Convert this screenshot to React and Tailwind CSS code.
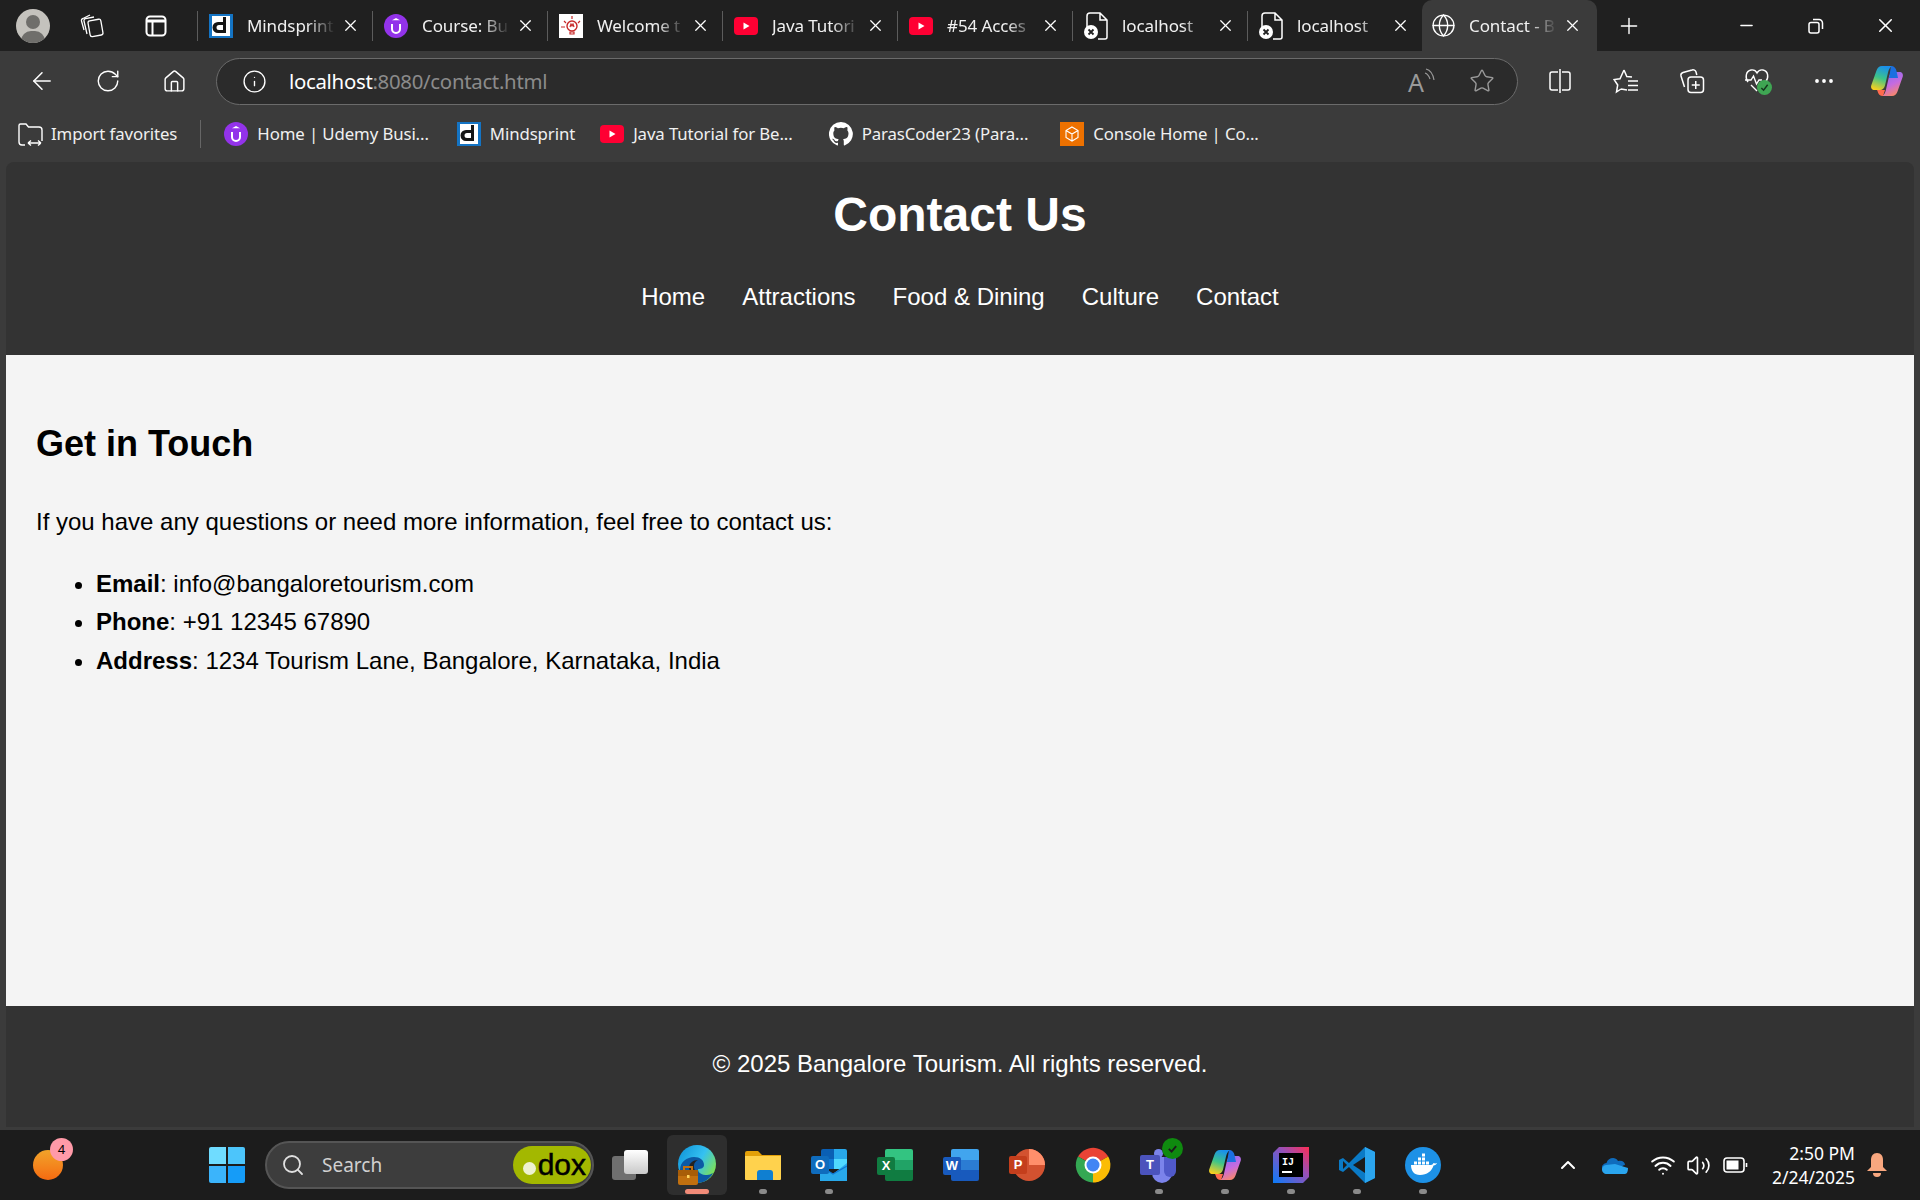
import React from 'react';
import { ArrowLeft, RotateCw, Home, Info, Star, X, Plus, Minus, Globe, MoreHorizontal, Search, ChevronUp, Wifi, Volume2 } from 'lucide-react';

const uiFont = "font-['Noto_Sans','Open_Sans',sans-serif]";

function DocIcon() {
  return (
    <svg width="26" height="30" viewBox="0 0 26 30" fill="none" stroke="#fff" strokeWidth="1.5">
      <path d="M9 2h8l7 7v17a2 2 0 0 1-2 2h-7M17 2v7h7M4 17V5a3 3 0 0 1 3-3h2" />
      <circle cx="8" cy="21" r="7" fill="#fff" stroke="none" />
      <path d="M5.5 18.5l5 5M10.5 18.5l-5 5" stroke="#222" strokeWidth="1.8" />
    </svg>
  );
}

function DIcon({ bg = '#fff' }) {
  return (
    <svg width="24" height="24" viewBox="0 0 24 24">
      <rect width="24" height="24" fill="#1474c4" />
      <rect x="3" y="2" width="18" height="20" fill={bg} />
      <path d="M14 3h3v16h-8a5 5 0 0 1 0-11h5zM10 11a2 2 0 0 0 0 5h4v-5z" fill="#151515" fillRule="evenodd" />
    </svg>
  );
}

function UdemyIcon() {
  return (
    <svg width="24" height="24" viewBox="0 0 24 24">
      <circle cx="12" cy="12" r="12" fill="#9333ea" />
      <path d="M8 10v5a4 4 0 0 0 8 0v-5" fill="none" stroke="#fff" strokeWidth="2" />
      <path d="M12 4l4 2.2H8z" fill="#fff" />
    </svg>
  );
}

function BulbIcon() {
  return (
    <svg width="24" height="24" viewBox="0 0 24 24">
      <rect width="24" height="24" fill="#fff" />
      <circle cx="13" cy="12" r="5" fill="none" stroke="#c62828" strokeWidth="1.4" />
      <path d="M13 2v3M5 7l2 2M2 13h4M21 7l-2 2M11 18h4v2h-4zM11 13l1-3 1 2 1-2 1 3" stroke="#c62828" strokeWidth="1.2" fill="none" />
    </svg>
  );
}

function YtIcon() {
  return (
    <svg width="24" height="18" viewBox="0 0 24 18">
      <rect width="24" height="18" rx="4" fill="#ff0033" />
      <path d="M9.5 5.5l6 3.5-6 3.5z" fill="#fff" />
    </svg>
  );
}

function GithubIcon() {
  return (
    <svg width="24" height="24" viewBox="0 0 24 24" fill="#fff">
      <path d="M12 0a12 12 0 0 0-3.8 23.4c.6.1.8-.3.8-.6v-2c-3.3.7-4-1.6-4-1.6-.6-1.4-1.4-1.8-1.4-1.8-1-.7.1-.7.1-.7 1.2.1 1.8 1.2 1.8 1.2 1 1.8 2.8 1.3 3.5 1 .1-.8.4-1.3.8-1.6-2.7-.3-5.5-1.3-5.5-6 0-1.2.5-2.3 1.2-3.1-.1-.3-.5-1.5.1-3.2 0 0 1-.3 3.3 1.2a11.500 11.500 0 0 1 6 0c2.300-1.500 3.300-1.200 3.300-1.200.6 1.700.2 2.900.1 3.200.8.800 1.200 1.900 1.200 3.100 0 4.700-2.800 5.700-5.500 6 .4.400.8 1.100.8 2.200v3.300c0 .3.2.700.8.600A12 12 0 0 0 12 0z" />
    </svg>
  );
}

function AwsIcon() {
  return (
    <svg width="24" height="24" viewBox="0 0 24 24">
      <rect width="24" height="24" fill="#ed7100" />
      <path d="M12 5l6 3.500v7L12 19l-6-3.500v-7zM6 8.500l6 3.500 6-3.500M12 12v7" fill="none" stroke="#fff" strokeWidth="1.1" />
    </svg>
  );
}

function CopilotIcon({ id, size = 34 }) {
  const ribbon = "M12 2h10c-2.500 1.500-3.500 4-4 6.500l-3 13c-.6 2.500-2.500 4.500-5 4.500H4.500C2 26 .6 24 1.200 21.500L6.500 6.500C7.300 3.800 9.300 2 12 2z";
  return (
    <svg width={size} height={size} viewBox="0 0 34 34">
      <defs>
        <linearGradient id={`${id}a`} x1="0.6" y1="0" x2="0.3" y2="1">
          <stop offset="0" stopColor="#1a8fec" />
          <stop offset="0.5" stopColor="#3cc48a" />
          <stop offset="1" stopColor="#f8cf1f" />
        </linearGradient>
        <linearGradient id={`${id}b`} x1="0.7" y1="1" x2="0.3" y2="0">
          <stop offset="0" stopColor="#8a6cf0" />
          <stop offset="0.5" stopColor="#c56be0" />
          <stop offset="1" stopColor="#ff8a5c" />
        </linearGradient>
      </defs>
      <path d={ribbon} fill={`url(#${id}a)`} />
      <path d={ribbon} fill={`url(#${id}b)`} transform="rotate(180 17 17)" />
      <path d="M21 2c3 0 5 2 5.500 5l1.500 7h-9l2-12z" fill="#1b6fe0" />
      <path d="M13 32c-3 0-5-2-5.500-5l-.5-1h8z" fill="#ff6a4d" />
    </svg>
  );
}

function EdgeIcon() {
  return (
    <svg width="40" height="42" viewBox="0 0 40 42">
      <defs>
        <linearGradient id="edgeA" x1="0" y1="0" x2="1" y2="0.6">
          <stop offset="0" stopColor="#0c8fd6" />
          <stop offset="0.6" stopColor="#35c1f1" />
          <stop offset="1" stopColor="#7be05a" />
        </linearGradient>
      </defs>
      <circle cx="20" cy="20" r="19" fill="url(#edgeA)" />
      <path d="M3 26c0-8 7-13 14-13 6 0 10 3 10 8 0 3-3 4-6 4 0 4 4 6 9 6 2 0 4-1 6-2-3 6-9 10-16 10C11 39 3 34 3 26z" fill="#0c59a4" />
      <path d="M12 24c0-5 4-8 9-8-5 2-5 8-2 12-3 0-7-1-7-4z" fill="#222" />
      <rect x="1" y="26" width="20" height="15" rx="2" fill="#c2700f" />
      <rect x="1" y="26" width="20" height="6" fill="#a85d08" />
      <path d="M7 26v-3h8v3" fill="none" stroke="#c2700f" strokeWidth="2" />
      <rect x="10" y="31" width="2.500" height="3" fill="#ffd35c" />
    </svg>
  );
}

function FilesIcon() {
  return (
    <svg width="36" height="32" viewBox="0 0 36 32">
      <path d="M0 4a2 2 0 0 1 2-2h11l4 4h19v6H0z" fill="#e3a008" />
      <path d="M0 7h36v23a1 1 0 0 1-1 1H1a1 1 0 0 1-1-1z" fill="#ffd24d" />
      <path d="M12 31v-7a3 3 0 0 1 3-3h10a3 3 0 0 1 3 3v7z" fill="#0f7fd1" />
    </svg>
  );
}

function OfficeIcon({ letter, back, mid, top, badge }) {
  return (
    <div className="relative h-[32px] w-[36px]">
      <div className="absolute right-0 top-0 flex h-full w-[28px] flex-col overflow-hidden rounded-[2px]">
        <div className="flex-1" style={{ background: top }} />
        <div className="flex-1" style={{ background: mid }} />
        <div className="flex-1" style={{ background: back }} />
      </div>
      <div className="absolute left-0 top-[8px] flex h-[18px] w-[18px] items-center justify-center rounded-[2px] font-['Liberation_Sans',sans-serif] text-[13px] font-bold text-white" style={{ background: badge }}>{letter}</div>
    </div>
  );
}

function OutlookIcon() {
  return (
    <div className="relative h-[32px] w-[36px]">
      <div className="absolute right-0 top-0 grid h-[20px] w-[26px] grid-cols-2 overflow-hidden rounded-t-[2px]">
        <div className="bg-[#0a5fb4]" /><div className="bg-[#28a8ea]" />
        <div className="bg-[#0f78d4]" /><div className="bg-[#50d9ff]" />
      </div>
      <svg className="absolute bottom-0 right-0" width="27" height="18" viewBox="0 0 27 18">
        <path d="M0 3l13 8 14-11v18H0z" fill="#28a8ea" />
        <path d="M0 3l13 8 14-8" fill="none" stroke="#0f78d4" strokeWidth="1.200" />
      </svg>
      <div className="absolute left-0 top-[7px] flex h-[18px] w-[18px] items-center justify-center rounded-[2px] bg-[#0f6cbd] font-['Liberation_Sans',sans-serif] text-[13px] font-bold text-white">O</div>
    </div>
  );
}

function PptIcon() {
  return (
    <div className="relative h-[32px] w-[36px]">
      <svg className="absolute right-0 top-0" width="32" height="32" viewBox="0 0 32 32">
        <circle cx="16" cy="16" r="16" fill="#d35230" />
        <path d="M16 0a16 16 0 0 1 16 16H16z" fill="#ff8f6b" />
      </svg>
      <div className="absolute left-0 top-[7px] flex h-[18px] w-[18px] items-center justify-center rounded-[2px] bg-[#c43e1c] font-['Liberation_Sans',sans-serif] text-[13px] font-bold text-white">P</div>
    </div>
  );
}

function ChromeIcon() {
  return (
    <svg width="36" height="36" viewBox="0 0 36 36">
      <path d="M18 18L3 9.500A17.500 17.500 0 0 1 33.200 9.500z" fill="#ea4335" />
      <path d="M18 18L33.200 9.500A17.500 17.500 0 0 1 18 35.500z" fill="#fbbc04" />
      <path d="M18 18v17.500A17.500 17.500 0 0 1 3 9.500z" fill="#34a853" />
      <circle cx="18" cy="18" r="8.500" fill="#fff" />
      <circle cx="18" cy="18" r="6.500" fill="#4285f4" />
    </svg>
  );
}

function TeamsIcon() {
  return (
    <div className="relative h-[36px] w-[38px]">
      <div className="absolute left-[14px] top-[2px] h-[9px] w-[9px] rounded-full bg-[#7b83eb]" />
      <div className="absolute left-[12px] top-[10px] h-[26px] w-[20px] rounded-b-full rounded-t-[6px] bg-[#7b83eb]" />
      <div className="absolute left-[24px] top-[10px] h-[20px] w-[12px] rounded-b-full rounded-t-[5px] bg-[#5059c9]" />
      <div className="absolute left-0 top-[8px] flex h-[20px] w-[20px] items-center justify-center rounded-[2px] bg-[#4b53bc] font-['Liberation_Sans',sans-serif] text-[13px] font-bold text-white">T</div>
      <div className="absolute -top-[9px] left-[22px] flex h-[21px] w-[21px] items-center justify-center rounded-full bg-[#0f8a0f]">
        <svg width="11" height="11" viewBox="0 0 12 12" fill="none" stroke="#1b1b1b" strokeWidth="2"><path d="M2 6.500l3 3 5-6" /></svg>
      </div>
    </div>
  );
}

function IntellijIcon() {
  return (
    <svg width="36" height="36" viewBox="0 0 36 36">
      <defs>
        <linearGradient id="ijA" x1="0" y1="1" x2="1" y2="0">
          <stop offset="0" stopColor="#087cfa" />
          <stop offset="0.6" stopColor="#9a4fb5" />
          <stop offset="1" stopColor="#ff2d55" />
        </linearGradient>
      </defs>
      <path d="M6 0h30v30l-6 6H0V6z" fill="url(#ijA)" />
      <rect x="6" y="6" width="24" height="24" fill="#000" />
      <text x="9" y="18" fontSize="10" fontWeight="700" fill="#fff" fontFamily="Liberation Mono, monospace">IJ</text>
      <rect x="9" y="24" width="10" height="2" fill="#fff" />
    </svg>
  );
}

function VsCodeIcon() {
  return (
    <svg width="36" height="36" viewBox="0 0 36 36">
      <path d="M26 0l10 5v26l-10 5L10 20l-6 5-4-2 0-10 4-2 6 5z" fill="#0a7ac6" />
      <path d="M26 0l10 5v26l-10 5z" fill="#2ba5ee" />
      <path d="M26 10L14 18l12 8z" fill="#1b1b1b" />
      <path d="M4 14l4 4-4 4z" fill="#1b1b1b" />
    </svg>
  );
}

function DockerIcon() {
  return (
    <svg width="36" height="36" viewBox="0 0 36 36">
      <circle cx="18" cy="18" r="18" fill="#1d91e6" />
      <path d="M6 18h20c1 0 2-1 2.500-2 1 .5 2.500 .5 3.500 0-.5 1.500-2 2.500-3.500 2.500C27 24 22 28 15 28c-6 0-9-4-9-10z" fill="#fff" />
      <path d="M9 14.500h3v3H9zM13 14.500h3v3h-3zM17 14.500h3v3h-3zM21 14.500h3v3h-3zM13 10.500h3v3h-3zM17 10.500h3v3h-3zM17 6.500h3v3h-3z" fill="#fff" />
    </svg>
  );
}

function Tab({ icon, title, active }) {
  return (
    <div className={active
      ? "relative flex h-[51px] w-[175px] items-center rounded-t-[10px] bg-[#3b3b3b] pl-[8px]"
      : "relative flex h-[51px] w-[175px] items-center pl-[11px] before:absolute before:left-0 before:top-[11px] before:h-[30px] before:w-px before:bg-[#5c5c5c]"}>
      <div className="flex w-[26px] shrink-0 items-center justify-center">{icon}</div>
      <div className="ml-[13px] w-[88px] overflow-hidden whitespace-nowrap text-[17px] tracking-[-0.1px] text-[#f0f0f0] [mask-image:linear-gradient(to_right,black_68%,transparent)]">{title}</div>
      <X className="ml-[6px] text-white" size={19} strokeWidth={1.6} />
    </div>
  );
}

function TabStrip() {
  const tabs = [
    { icon: <DIcon />, title: 'Mindsprint' },
    { icon: <UdemyIcon />, title: 'Course: Bu' },
    { icon: <BulbIcon />, title: 'Welcome t' },
    { icon: <YtIcon />, title: 'Java Tutori' },
    { icon: <YtIcon />, title: '#54 Acces' },
    { icon: <DocIcon />, title: 'localhost' },
    { icon: <DocIcon />, title: 'localhost' },
    { icon: <Globe size={25} strokeWidth={1.3} className="text-white" />, title: 'Contact - B', active: true },
  ];
  return (
    <div className="flex h-[51px] items-end bg-[#202020]">
      <div className="flex h-full w-[197px] shrink-0 items-center pl-[16px]">
        <div className="relative h-[34px] w-[34px] overflow-hidden rounded-full bg-[#c4c2bd]">
          <div className="absolute left-[10px] top-[6px] h-[14px] w-[14px] rounded-full bg-[#6f6e6b]" />
          <div className="absolute left-[5px] top-[22px] h-[20px] w-[24px] rounded-full bg-[#6f6e6b]" />
        </div>
        <svg className="ml-[29px]" width="26" height="26" viewBox="0 0 26 26" fill="none" stroke="#fff" strokeWidth="1.3">
          <rect x="10" y="7" width="13" height="16" rx="2" transform="rotate(-10 16 15)" />
          <path d="M8 21L5 8a2 2 0 0 1 1.500-2.400L15 4M5 17L2.500 8a2 2 0 0 1 1.500-2.500L11 2" />
        </svg>
        <svg className="ml-[39px]" width="24" height="24" viewBox="0 0 24 24" fill="none" stroke="#fff" strokeWidth="2">
          <rect x="2.500" y="2.500" width="19" height="19" rx="3.500" />
          <path d="M2.500 7h19" strokeWidth="3" />
          <path d="M8.500 8v13.500" />
        </svg>
      </div>
      {tabs.map((t, i) => <Tab key={i} {...t} />)}
      <div className="flex h-full w-[65px] items-center justify-center -ml-[1px]">
        <Plus className="text-white" size={26} strokeWidth={1.3} />
      </div>
      <div className="flex-1" />
      <div className="flex h-full w-[69px] items-center justify-center"><Minus className="text-white" size={19} strokeWidth={2} /></div>
      <div className="flex h-full w-[69px] items-center justify-center">
        <svg width="16" height="16" viewBox="0 0 16 16" fill="none" stroke="#fff" strokeWidth="1.500">
          <rect x="1" y="4.500" width="10" height="10.500" rx="2" />
          <path d="M5 1.500h6a3.500 3.500 0 0 1 3.500 3.500v6" />
        </svg>
      </div>
      <div className="flex h-full w-[70px] items-center justify-center"><X className="text-white" size={23} strokeWidth={1.6} /></div>
    </div>
  );
}

function ToolBtn({ children, className = '' }) {
  return <div className={`flex w-[66px] shrink-0 items-center justify-center ${className}`}>{children}</div>;
}

function Toolbar() {
  return (
    <div className="flex h-[60px] items-center bg-[#3b3b3b] pl-[9px]">
      <ToolBtn><ArrowLeft className="text-white" size={28} strokeWidth={1.3} /></ToolBtn>
      <ToolBtn><RotateCw className="text-white" size={26} strokeWidth={1.3} /></ToolBtn>
      <ToolBtn><Home className="text-white" size={25} strokeWidth={1.4} /></ToolBtn>
      <div className="ml-[9px] flex h-[47px] w-[1304px] items-center rounded-full border-[1.5px] border-[#6b6b6b] bg-[#2b2b2b] pl-[25px]">
        <Info className="text-white" size={25} strokeWidth={1.3} />
        <div className="ml-[22px] flex-1 text-[20.4px] tracking-[-0.3px]">
          <span className="text-white">localhost</span><span className="text-[#8b8b8b]">:8080/contact.html</span>
        </div>
        <span className="relative mr-[33px] h-[26px] w-[28px] text-[#9a9a9a]">
          <span className="absolute bottom-[-1px] left-0 text-[25px] leading-[26px]">A</span>
          <svg className="absolute right-0 top-0" width="12" height="14" viewBox="0 0 12 14" fill="none" stroke="currentColor" strokeWidth="1.200"><path d="M2 1c4 1 7 5 8 11M1 5c2.500 .8 4 3 5 6" /></svg>
        </span>
        <Star className="mr-[22px] text-[#9a9a9a]" size={26} strokeWidth={1.3} />
      </div>
      <div className="ml-[9px] flex">
        <ToolBtn>
          <svg width="24" height="26" viewBox="0 0 24 26" fill="none" stroke="#fff" strokeWidth="1.500">
            <path d="M10 4H4a2 2 0 0 0-2 2v14a2 2 0 0 0 2 2h6M14 4h6a2 2 0 0 1 2 2v14a2 2 0 0 1-2 2h-6M12 1v24" />
          </svg>
        </ToolBtn>
        <ToolBtn>
          <svg width="26" height="26" viewBox="0 0 26 26" fill="none" stroke="#fff" strokeWidth="1.500">
            <path d="M11 2l2.800 6.500 5.200.5M8 21l-4.500 3 1.200-7L1 11.500l6-.8L11 2M8 21l6 1" />
            <path d="M15 13h10M15 17.500h10M15 22h10" />
          </svg>
        </ToolBtn>
        <ToolBtn>
          <svg width="26" height="26" viewBox="0 0 26 26" fill="none" stroke="#fff" strokeWidth="1.500">
            <rect x="9" y="9" width="15.500" height="15.500" rx="3" />
            <path d="M16.750 13v8M12.750 17h8M5.500 19L2 8a3 3 0 0 1 2-3.500L13 2a3 3 0 0 1 4 2l.8 3" />
          </svg>
        </ToolBtn>
        <ToolBtn>
          <div className="relative h-[28px] w-[28px]">
            <svg width="26" height="26" viewBox="0 0 26 26" fill="none" stroke="#fff" strokeWidth="1.400">
              <path d="M4 15C1 11 1.500 4 7 3c3-.5 5 1 6 3 1-2 3-3.500 6-3 5.500 1 6 8 2.500 12M1 13h6l2.500-4 3 8 2.500-4h3M7 18l6 6" />
            </svg>
            <div className="absolute bottom-0 right-0 flex h-[15px] w-[15px] items-center justify-center rounded-full bg-[#3fa653]">
              <svg width="9" height="9" viewBox="0 0 10 10" fill="none" stroke="#14361d" strokeWidth="1.600"><path d="M1.500 5.500l2.500 2.500 4.500-6" /></svg>
            </div>
          </div>
        </ToolBtn>
        <ToolBtn><MoreHorizontal className="text-white" size={24} strokeWidth={1.8} /></ToolBtn>
        <ToolBtn className="-ml-[3px]"><CopilotIcon id="cpTop" /></ToolBtn>
      </div>
    </div>
  );
}

function Fav({ icon, title, className }) {
  return (
    <div className={`flex items-center ${className}`}>
      <div className="flex w-[24px] justify-center">{icon}</div>
      <span className="ml-[9px] whitespace-nowrap text-[16.8px] tracking-[-0.1px] text-[#f0f0f0]">{title}</span>
    </div>
  );
}

function FavBar() {
  return (
    <div className="flex h-[51px] items-center bg-[#3b3b3b] pb-[5px] pl-[18px]">
      <svg width="25" height="25" viewBox="0 0 25 25" fill="none" stroke="#fff" strokeWidth="1.400">
        <path d="M7 23H4a3 3 0 0 1-3-3V3.500A1.500 1.500 0 0 1 2.500 2H8l2.500 3H21a3 3 0 0 1 3 3v11M10 21h13M10 21l3-2.500M10 21l3 2.500M23 21l-3-2.500M23 21l-3 2.500" />
      </svg>
      <span className="ml-[8px] whitespace-nowrap text-[16.8px] tracking-[-0.1px] text-[#f0f0f0]">Import favorites</span>
      <div className="ml-[23px] h-[28px] w-px bg-[#666]" />
      <Fav className="ml-[23px]" icon={<UdemyIcon />} title="Home | Udemy Busi..." />
      <Fav className="ml-[28px]" icon={<DIcon />} title="Mindsprint" />
      <Fav className="ml-[25px]" icon={<YtIcon />} title="Java Tutorial for Be..." />
      <Fav className="ml-[36px]" icon={<GithubIcon />} title="ParasCoder23 (Para..." />
      <Fav className="ml-[32px]" icon={<AwsIcon />} title="Console Home | Co..." />
    </div>
  );
}

function SitePage() {
  const links = ['Home', 'Attractions', 'Food & Dining', 'Culture', 'Contact'];
  return (
    <div className="flex flex-1 flex-col bg-[#3b3b3b] px-[6px] pb-[3px]">
      <div className="flex flex-1 flex-col overflow-hidden rounded-t-[8px] font-['Liberation_Sans',Arial,sans-serif] text-[24px] text-black">
        <header className="h-[193px] bg-[#333] pt-[25px] text-center text-white">
          <h1 className="text-[48px] font-bold leading-[56px]">Contact Us</h1>
          <nav className="mt-[35px] flex justify-center gap-[37px] leading-[38px]">
            {links.map((l) => <span key={l}>{l}</span>)}
          </nav>
        </header>
        <main className="flex-1 bg-[#f4f4f4] pl-[30px] pt-[65px]">
          <h2 className="text-[36px] font-bold leading-[48px]">Get in Touch</h2>
          <p className="mt-[35px] leading-[38px]">If you have any questions or need more information, feel free to contact us:</p>
          <ul className="mt-[24px] list-disc pl-[60px] leading-[38.4px]">
            <li><strong>Email</strong>: info@bangaloretourism.com</li>
            <li><strong>Phone</strong>: +91 12345 67890</li>
            <li><strong>Address</strong>: 1234 Tourism Lane, Bangalore, Karnataka, India</li>
          </ul>
        </main>
        <footer className="flex h-[121px] items-start justify-center bg-[#333] pt-[39px] text-white">
          <p className="leading-[38px]">© 2025 Bangalore Tourism. All rights reserved.</p>
        </footer>
      </div>
    </div>
  );
}

function TaskIcon({ children, dot, active }) {
  return (
    <div className={active
      ? "relative flex h-[60px] w-[60px] items-center justify-center rounded-[6px] bg-[#2e2e2e] mx-[3px]"
      : "relative flex h-[60px] w-[66px] items-center justify-center"}>
      {children}
      {dot && <div className={active
        ? "absolute bottom-[1px] left-[18px] h-[5px] w-[24px] rounded-full bg-[#f28b78]"
        : "absolute bottom-[1px] left-[29px] h-[5px] w-[8px] rounded-full bg-[#8a8a8a]"} />}
    </div>
  );
}

function Taskbar() {
  return (
    <div className="flex h-[70px] items-center bg-[#1c1c1c] pl-[33px]">
      <div className="relative h-[30px] w-[30px] rounded-full bg-gradient-to-b from-[#f0a32a] to-[#f56a10]">
        <div className="absolute -right-[10px] -top-[12px] flex h-[23px] w-[23px] items-center justify-center rounded-full bg-[#ff9aa8] text-[13px] text-black">4</div>
      </div>
      <div className="ml-[146px] grid h-[36px] w-[36px] grid-cols-2 gap-[2px]">
        <div className="rounded-tl-[2px] bg-[#6fdcff]" />
        <div className="rounded-tr-[2px] bg-[#4cc5fb]" />
        <div className="rounded-bl-[2px] bg-[#3bb4fb]" />
        <div className="rounded-br-[2px] bg-[#159cf8]" />
      </div>
      <div className="relative ml-[20px] flex h-[48px] w-[329px] items-center rounded-full border-[2px] border-[#555] bg-[#3d3d3d] pl-[14px]">
        <Search className="text-[#e0e0e0]" size={24} strokeWidth={1.8} />
        <span className="ml-[17px] text-[19px] text-[#d0d0d0]">Search</span>
        <div className="absolute right-[1px] top-[3px] flex h-[38px] w-[78px] items-center justify-end rounded-full bg-[#a3b800] pr-[5px] text-[30px] leading-none text-black">
          <div className="mr-[2px] mt-[6px] h-[13px] w-[13px] rounded-full bg-[#eef2d0]" />
          <span className="font-['Liberation_Sans',sans-serif] [-webkit-text-stroke:0.5px_black]">dox</span>
        </div>
      </div>
      <div className="relative ml-[18px] h-[30px] w-[36px]">
        <div className="absolute bottom-0 left-0 h-[24px] w-[24px] rounded-[3px] bg-[#6f6f6f]" />
        <div className="absolute right-0 top-0 h-[24px] w-[24px] rounded-[3px] bg-gradient-to-b from-white to-[#c9c9c9]" />
      </div>
      <div className="ml-[16px] flex items-center">
        <TaskIcon dot active><EdgeIcon /></TaskIcon>
        <TaskIcon dot><FilesIcon /></TaskIcon>
        <TaskIcon dot><OutlookIcon /></TaskIcon>
        <TaskIcon><OfficeIcon letter="X" top="#33c481" mid="#21a366" back="#107c41" badge="#107c41" /></TaskIcon>
        <TaskIcon><OfficeIcon letter="W" top="#41a5ee" mid="#2b7cd3" back="#185abd" badge="#185abd" /></TaskIcon>
        <TaskIcon><PptIcon /></TaskIcon>
        <TaskIcon><ChromeIcon /></TaskIcon>
        <TaskIcon dot><TeamsIcon /></TaskIcon>
        <TaskIcon dot><CopilotIcon id="cpTask" /></TaskIcon>
        <TaskIcon dot><IntellijIcon /></TaskIcon>
        <TaskIcon dot><VsCodeIcon /></TaskIcon>
        <TaskIcon dot><DockerIcon /></TaskIcon>
      </div>
      <div className="ml-[100px] flex items-center">
        <ChevronUp className="text-white" size={24} strokeWidth={2} />
        <svg className="ml-[22px]" width="26" height="18" viewBox="0 0 26 18">
          <path d="M5 17a5 5 0 0 1-.5-10C6 2 13 0 16 5c4-1 7 1 7 4-3 0-4 3-6 8z" fill="#0f6cbd" />
          <path d="M5 18a4.500 4.500 0 0 1-1-9l9-1 13 4c0 3-1 6-3 6z" fill="#2aa5ee" />
        </svg>
        <Wifi className="ml-[22px] text-white" size={26} strokeWidth={1.8} />
        <Volume2 className="ml-[10px] text-white" size={25} strokeWidth={1.6} />
        <svg className="ml-[12px]" width="25" height="20" viewBox="0 0 25 20" fill="none" stroke="#fff" strokeWidth="1.600">
          <rect x="1" y="3" width="20" height="14" rx="3" />
          <rect x="3.500" y="5.500" width="12" height="9" fill="#fff" stroke="none" />
          <path d="M23.500 8v4" />
        </svg>
        <div className="ml-[7px] w-[100px] text-right text-[17.5px] leading-[24px] text-white">
          <div>2:50 PM</div>
          <div>2/24/2025</div>
        </div>
        <svg className="ml-[11px]" width="22" height="26" viewBox="0 0 22 26">
          <path d="M11 1c4 0 6 3 6 7v7l4 4H1l4-4V8c0-4 2-7 6-7z" fill="#f8a77f" />
          <path d="M7 21h8a4 4 0 0 1-8 0z" fill="#f8a77f" />
        </svg>
      </div>
    </div>
  );
}

export default function App() {
  return (
    <div className={`flex h-[1200px] w-[1920px] flex-col overflow-hidden ${uiFont}`}>
      <TabStrip />
      <Toolbar />
      <FavBar />
      <SitePage />
      <Taskbar />
    </div>
  );
}
